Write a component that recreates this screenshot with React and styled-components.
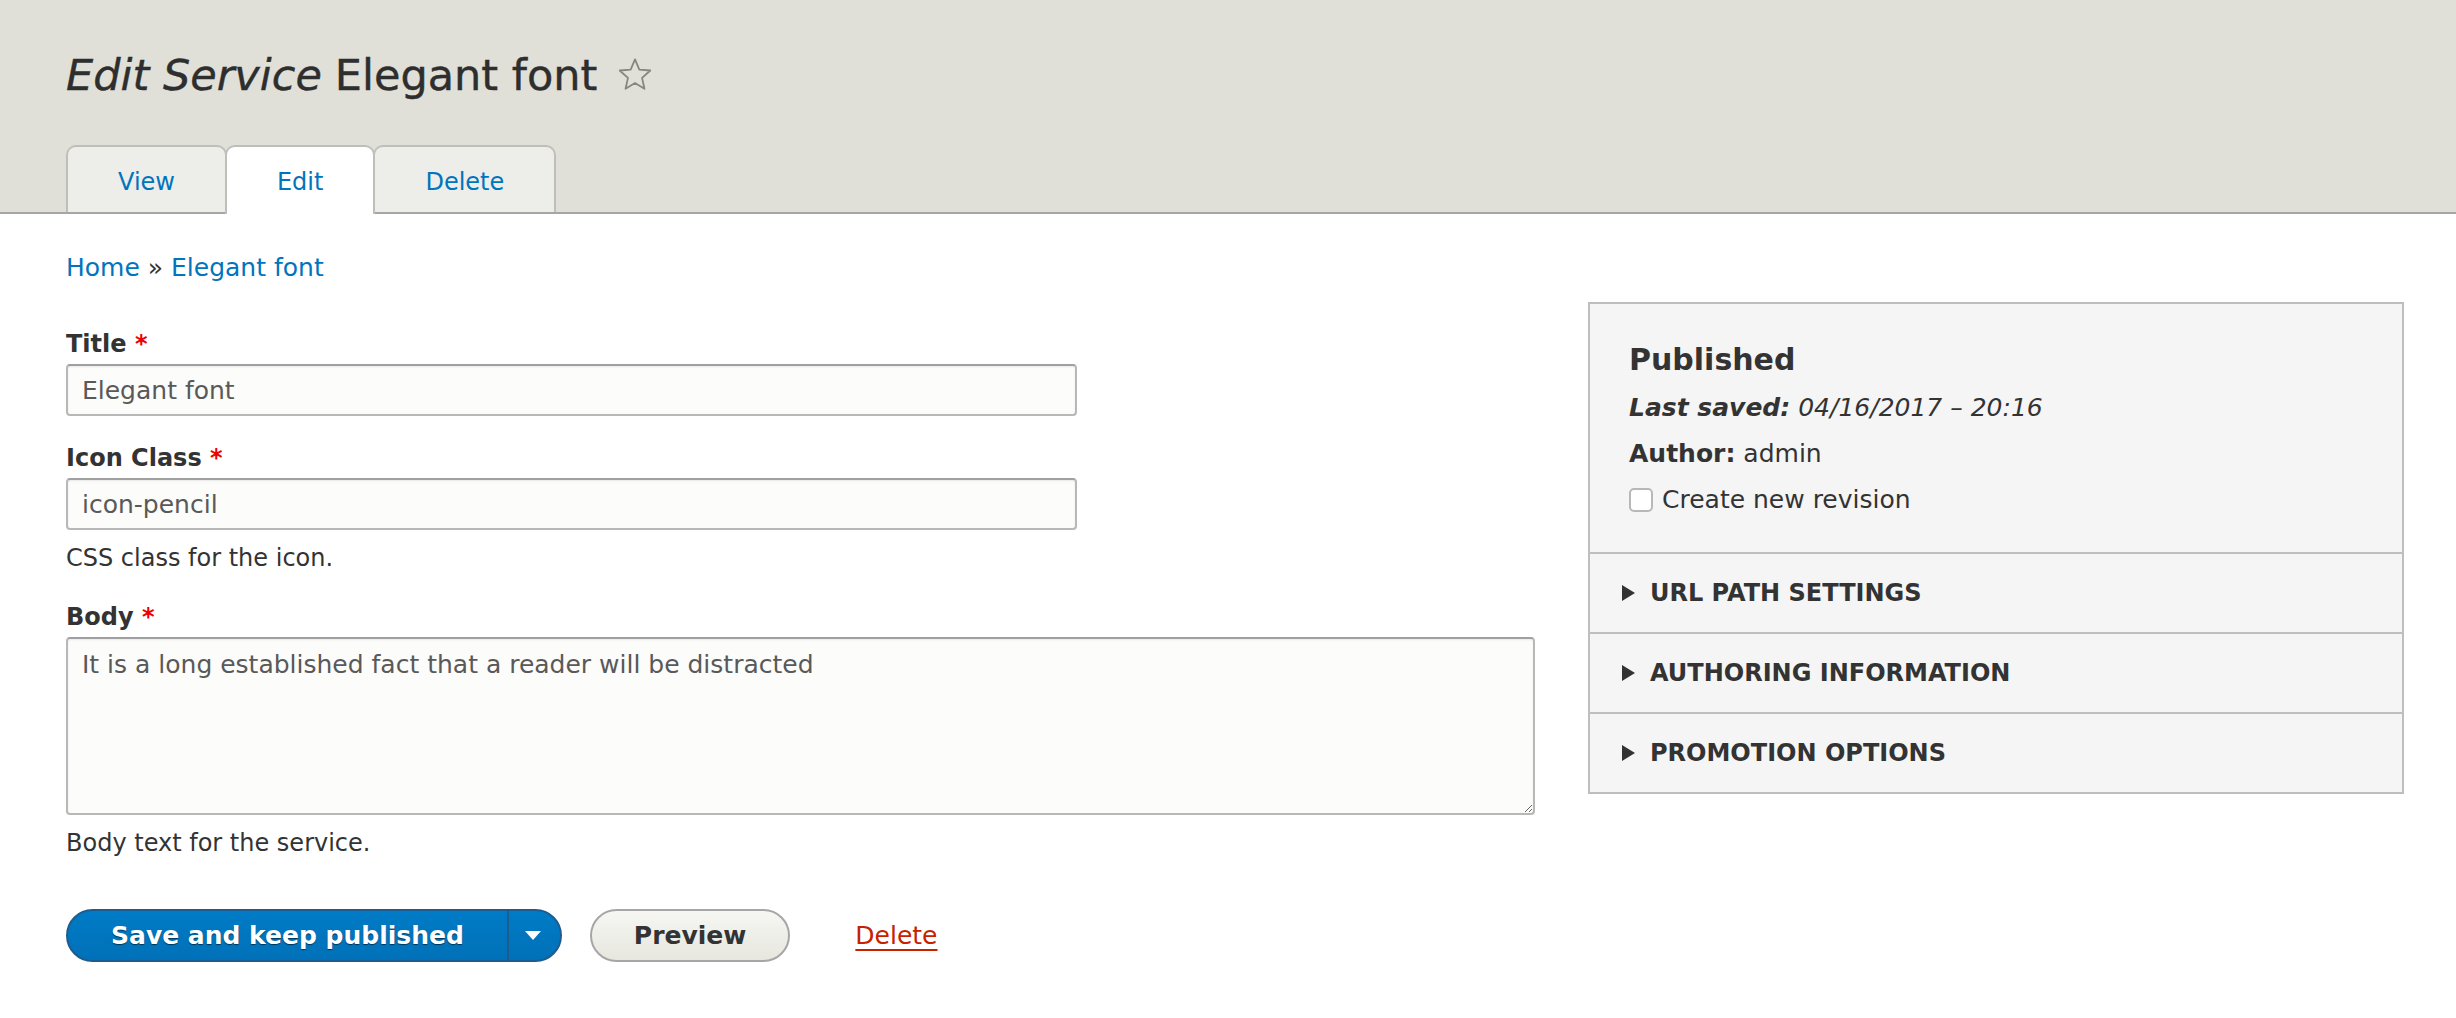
import React from 'react'
import styled, {createGlobalStyle, css} from 'styled-components'

const GlobalStyle = createGlobalStyle`
    body {
        margin: 0;
        background: #fff;
        color: #333;
        font-family: "DejaVu Sans", sans-serif;
    }
    * {
        box-sizing: border-box;
    }
`

const Header = styled.header`
    background: #e0e0d8;
    border-bottom: 2px solid #a6a6a6;
    padding: 50px 66px 0;
`

const PageTitle = styled.h1`
    display: flex;
    align-items: center;
    margin: 0 0 45px;
    height: 50px;
    font-size: 43px;
    line-height: 50px;
    font-weight: normal;
    color: #2e2e2e;
    -webkit-text-stroke: 0.4px #2e2e2e;

    em {
        font-style: italic;
        margin-right: 13px;
    }
`

const Star = styled.svg`
    margin-left: 20px;
    width: 36px;
    height: 38px;
`

const Tabs = styled.ul`
    display: flex;
    align-items: flex-start;
    height: 67px;
    margin: 0;
    padding: 0;
    list-style: none;
`

const Tab = styled.li`
    display: flex;
    align-items: center;
    justify-content: center;
    height: 67px;
    padding: 4px 50px 0;
    margin-left: -2px;
    border: 2px solid #bfbfba;
    border-bottom: none;
    border-radius: 10px 10px 0 0;
    background: #ededea;
    color: #0074bd;
    font-size: 24px;

    &:first-child {
        margin-left: 0;
    }

    ${props => props.active && css`
        position: relative;
        z-index: 1;
        height: 69px;
        padding-bottom: 2px;
        background: #fff;
    `}
`

const Main = styled.main`
    padding: 36px 52px 60px 66px;
`

const Breadcrumb = styled.nav`
    margin-bottom: 16px;
    font-size: 25px;
    line-height: 36px;
    color: #333;

    a {
        color: #0074bd;
        text-decoration: none;
    }
`

const Layout = styled.div`
    display: grid;
    grid-template-columns: 1fr 816px;
    column-gap: 53px;
    align-items: start;
`

const Form = styled.form`
    padding-top: 25px;
`

const Field = styled.div`
    margin-bottom: 25px;
`

const Label = styled.label`
    display: block;
    margin-bottom: 3px;
    font-size: 24px;
    line-height: 34px;
    font-weight: bold;
    color: #333;

    &::after {
        content: ' *';
        color: #e00;
    }
`

const fieldBox = css`
    display: block;
    padding: 0 14px;
    border: 2px solid #b8b8b8;
    border-top-color: #a0a0a0;
    border-radius: 4px;
    background: #fcfcfa;
    box-shadow: inset 0 1px 2px rgba(0, 0, 0, 0.08);
    color: #595959;
    font-family: "DejaVu Sans", sans-serif;
    font-size: 25px;
    outline: none;
`

const TextInput = styled.input`
    ${fieldBox}
    width: 1011px;
    height: 52px;
`

const TextArea = styled.textarea`
    ${fieldBox}
    width: 100%;
    height: 178px;
    padding-top: 8px;
    line-height: 36px;
    resize: vertical;
`

const Description = styled.div`
    margin-top: 11px;
    font-size: 24px;
    line-height: 34px;
    color: #333;
`

const Actions = styled.div`
    display: flex;
    align-items: center;
    gap: 28px;
    margin-top: 49px;
`

const SplitButton = styled.div`
    display: inline-flex;
    height: 53px;
    border: 2px solid #1e5c90;
    border-radius: 30px;
    overflow: hidden;
    background: linear-gradient(to bottom, #007bc6, #0071b8);
`

const PrimaryButton = styled.button`
    padding: 0 43px;
    border: none;
    border-right: 2px solid #1e5c90;
    background: transparent;
    color: #fff;
    font-family: "DejaVu Sans", sans-serif;
    font-size: 25px;
    font-weight: bold;
    text-shadow: 0 1px 1px rgba(0, 0, 0, 0.55);
`

const ArrowButton = styled.button`
    display: flex;
    align-items: center;
    justify-content: center;
    width: 51px;
    padding: 0;
    border: none;
    background: transparent;

    &::before {
        content: '';
        border-left: 8px solid transparent;
        border-right: 8px solid transparent;
        border-top: 9px solid #fff;
        margin-left: -2px;
    }
`

const Button = styled.button`
    height: 53px;
    padding: 0 42px;
    border: 2px solid #a6a6a6;
    border-radius: 30px;
    background: linear-gradient(to bottom, #f6f6f3, #e7e7df);
    color: #333;
    font-family: "DejaVu Sans", sans-serif;
    font-size: 25px;
    font-weight: bold;
`

const DangerLink = styled.a`
    margin-left: 37px;
    color: #c72100;
    font-size: 25px;
    text-decoration: underline;
    text-underline-offset: 5px;
    text-decoration-thickness: 2px;
`

const Sidebar = styled.aside`
    border: 2px solid #bebebe;
    background: #f5f5f5;
`

const Meta = styled.div`
    padding: 36px 39px 34px;
`

const MetaTitle = styled.h3`
    margin: 0 0 10px;
    font-size: 30px;
    line-height: 40px;
    font-weight: bold;
    color: #333;
`

const MetaLine = styled.div`
    margin-bottom: 10px;
    font-size: 25px;
    line-height: 36px;
    color: #333;
    ${props => props.italic && css`font-style: italic;`}

    b {
        font-weight: bold;
    }
`

const CheckRow = styled.label`
    display: flex;
    align-items: center;
    gap: 9px;
    font-size: 25px;
    line-height: 36px;
    color: #333;
`

const CheckBox = styled.span`
    width: 24px;
    height: 24px;
    border: 2px solid #b8b8b8;
    border-radius: 5px;
    background: #fff;
`

const Details = styled.div`
    display: flex;
    align-items: center;
    gap: 15px;
    height: 80px;
    padding-left: 32px;
    border-top: 2px solid #bebebe;
    font-size: 24px;
    font-weight: bold;
    color: #333;
    text-transform: uppercase;

    &::before {
        content: '';
        border-top: 8px solid transparent;
        border-bottom: 8px solid transparent;
        border-left: 13px solid #333;
    }
`

const App = () => {
    return (
        <>
            <GlobalStyle/>
            <Header>
                <PageTitle>
                    <em>Edit Service</em>
                    Elegant font
                    <Star viewBox="0 0 24 24">
                        <polygon
                            points="12,1.6 14.9,8.4 22.2,9 16.7,13.9 18.3,21.2 12,17.4 5.7,21.2 7.3,13.9 1.8,9 9.1,8.4"
                            fill="none"
                            stroke="#86867a"
                            strokeWidth="1.2"
                            strokeLinejoin="round"
                        />
                    </Star>
                </PageTitle>
                <Tabs>
                    <Tab>View</Tab>
                    <Tab active>Edit</Tab>
                    <Tab>Delete</Tab>
                </Tabs>
            </Header>
            <Main>
                <Breadcrumb>
                    <a href="#">Home</a> » <a href="#">Elegant font</a>
                </Breadcrumb>
                <Layout>
                    <Form>
                        <Field>
                            <Label htmlFor="title">Title</Label>
                            <TextInput id="title" defaultValue="Elegant font"/>
                        </Field>
                        <Field>
                            <Label htmlFor="icon">Icon Class</Label>
                            <TextInput id="icon" defaultValue="icon-pencil"/>
                            <Description>CSS class for the icon.</Description>
                        </Field>
                        <Field>
                            <Label htmlFor="body">Body</Label>
                            <TextArea id="body" defaultValue="It is a long established fact that a reader will be distracted"/>
                            <Description>Body text for the service.</Description>
                        </Field>
                        <Actions>
                            <SplitButton>
                                <PrimaryButton type="button">Save and keep published</PrimaryButton>
                                <ArrowButton type="button" aria-label="More actions"/>
                            </SplitButton>
                            <Button type="button">Preview</Button>
                            <DangerLink href="#">Delete</DangerLink>
                        </Actions>
                    </Form>
                    <Sidebar>
                        <Meta>
                            <MetaTitle>Published</MetaTitle>
                            <MetaLine italic><b>Last saved:</b> 04/16/2017 – 20:16</MetaLine>
                            <MetaLine><b>Author:</b> admin</MetaLine>
                            <CheckRow>
                                <CheckBox/>
                                Create new revision
                            </CheckRow>
                        </Meta>
                        <Details>URL path settings</Details>
                        <Details>Authoring information</Details>
                        <Details>Promotion options</Details>
                    </Sidebar>
                </Layout>
            </Main>
        </>
    )
}

export default App
